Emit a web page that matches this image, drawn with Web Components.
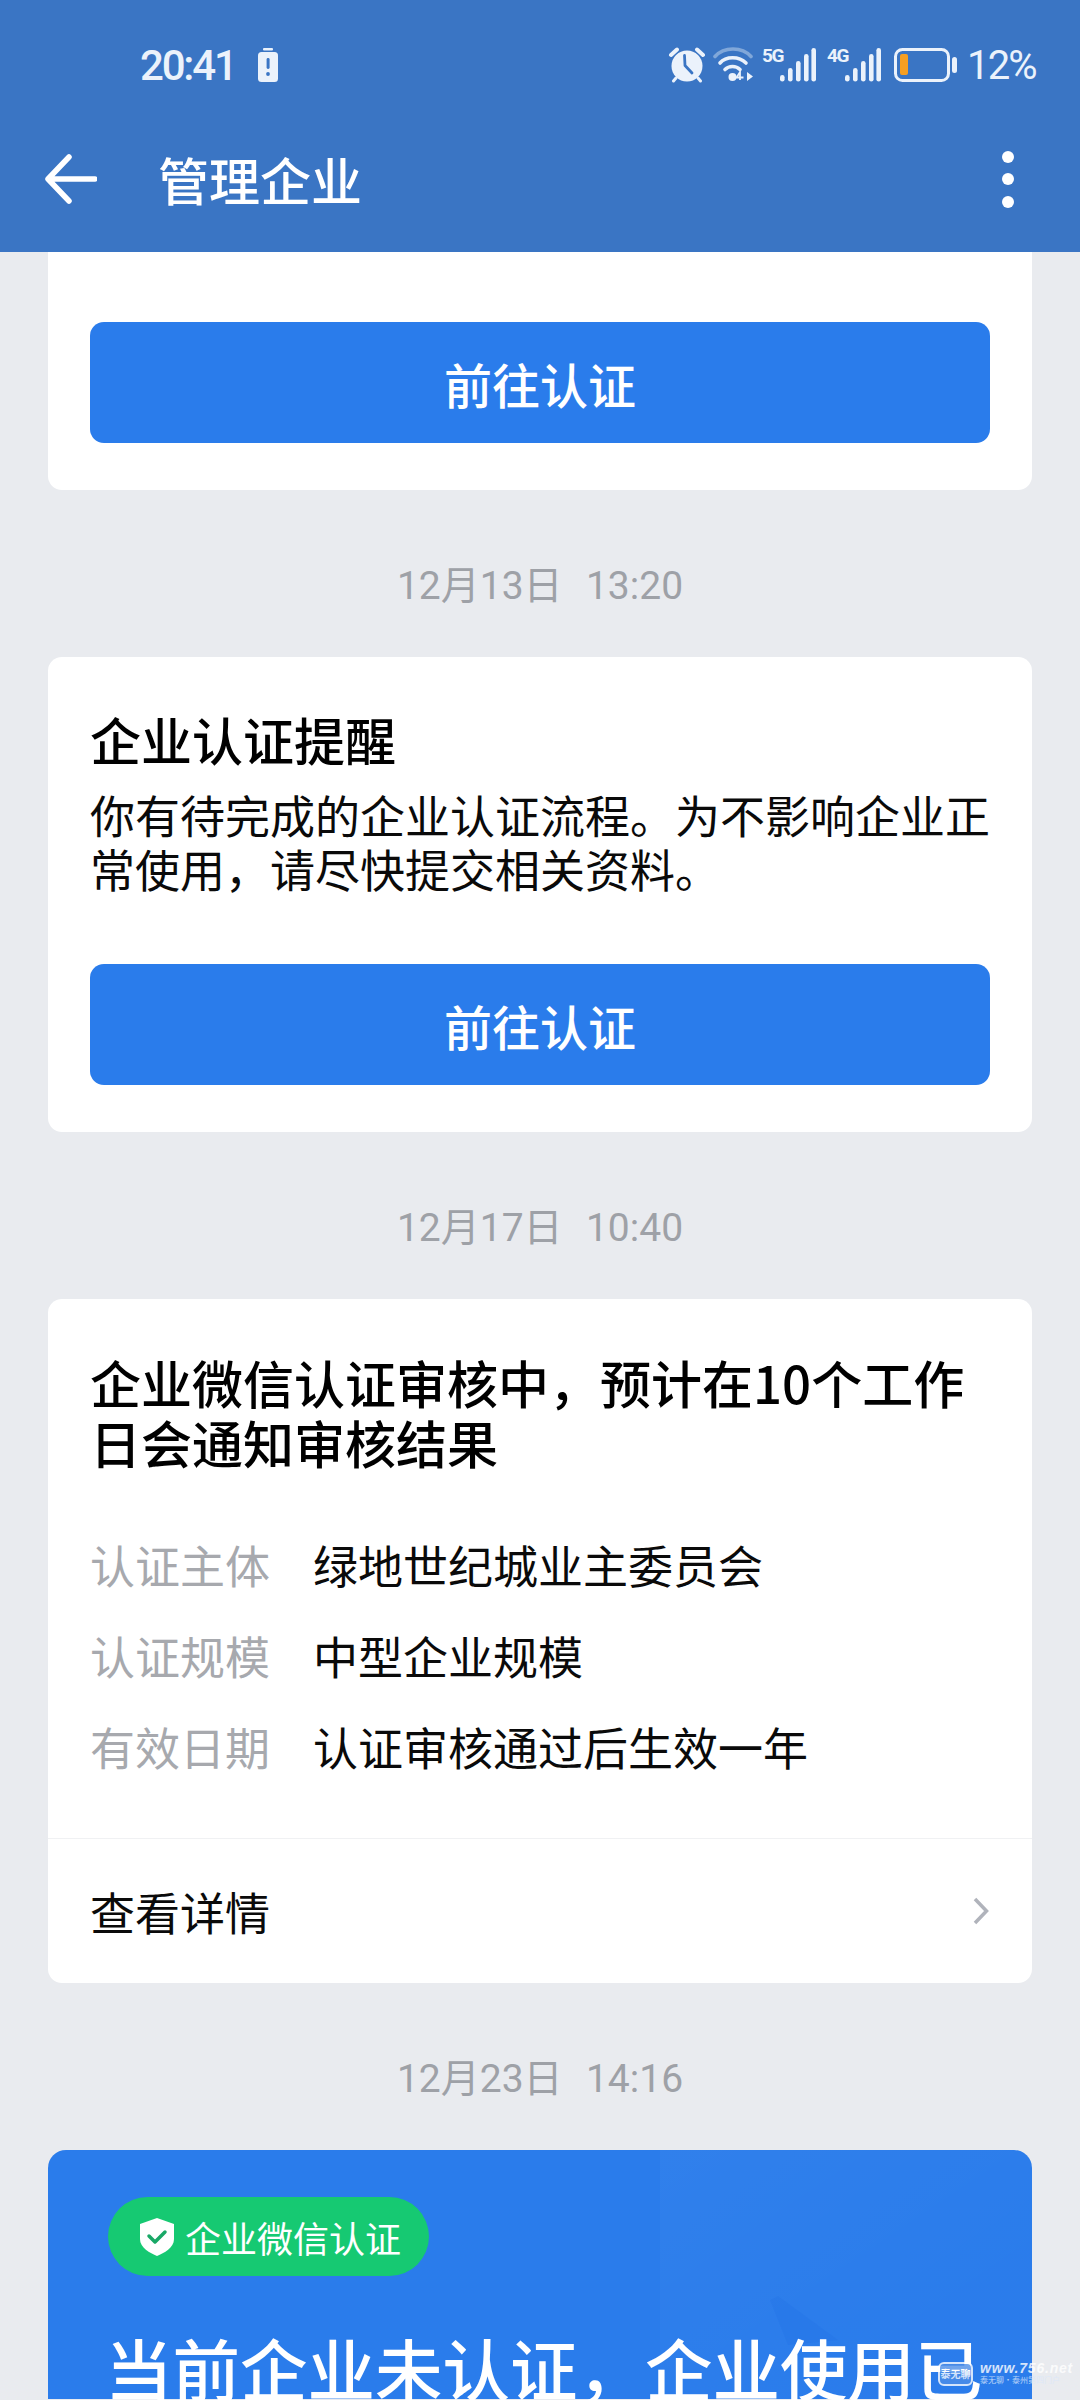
<!DOCTYPE html>
<html lang="zh"><head><meta charset="utf-8"><title>管理企业</title>
<style>
html,body{margin:0;padding:0}
body{width:1080px;height:2400px;overflow:hidden;background:#e9ebef;font-family:"Noto Sans CJK SC","Noto Sans",sans-serif;position:relative}
main{display:block;padding:0 48px}
</style></head><body>
<app-header title="管理企业"></app-header>
<main>
<notice-card clipped style="padding-top:70px"><action-button>前往认证</action-button></notice-card>
<time-label>12月13日&nbsp;&nbsp;13:20</time-label>
<notice-card heading="企业认证提醒">
  <p-text>你有待完成的企业认证流程。为不影响企业正常使用，请尽快提交相关资料。</p-text>
  <action-button>前往认证</action-button>
</notice-card>
<time-label>12月17日&nbsp;&nbsp;10:40</time-label>
<review-card heading="企业微信认证审核中，预计在10个工作日会通知审核结果">
  <info-row label="认证主体">绿地世纪城业主委员会</info-row>
  <info-row label="认证规模">中型企业规模</info-row>
  <info-row label="有效日期">认证审核通过后生效一年</info-row>
</review-card>
<time-label>12月23日&nbsp;&nbsp;14:16</time-label>
<cert-card></cert-card>
</main>
<water-mark></water-mark>
<script>
const def=(name,html)=>customElements.define(name,class extends HTMLElement{
  constructor(){super();this.attachShadow({mode:'open'})}
  connectedCallback(){this.shadowRoot.innerHTML=typeof html==='function'?html(this):html}
});
def('app-header',el=>`<style>
:host{display:block;background:#3a75c4;height:252px;color:#fff}
.status{height:130px;display:flex;align-items:center;padding:0 46px 0 140px;color:#ebf2fb;box-sizing:border-box}
.clock{font:500 42px/1 Roboto,sans-serif;letter-spacing:-2.200px;width:118px;padding-top:2px;white-space:nowrap}
.spacer{flex:1}
.icons{display:flex;align-items:center;height:50px}
.pct{font:400 40px/1 Roboto,sans-serif;margin-left:10px;letter-spacing:-1.800px;width:67px;padding-top:2px;white-space:nowrap}
svg{display:block;flex:none}
.bar{height:122px;display:flex;align-items:center;padding:0 0 24px 45px;box-sizing:border-box}
.title{font:500 51px/60px "Noto Sans CJK SC",sans-serif;margin-left:61px;flex:1}
.dots{display:flex;flex-direction:column;gap:10.500px;margin-right:66px}
.dots i{display:block;width:12px;height:12px;border-radius:50%;background:#fff}
</style>
<div class="status">
  <span class="clock">20:41</span>
  <svg width="20" height="34" viewBox="0 0 20 34"><rect x="5" y="0" width="10" height="2.400" rx="1" fill="#ebf2fb"/><rect x="0" y="4" width="20" height="30" rx="3.500" fill="#ebf2fb"/><rect x="8.600" y="10" width="3" height="11" rx="1.400" fill="#3a75c4"/><circle cx="10" cy="26" r="1.900" fill="#3a75c4"/></svg>
  <span class="spacer"></span>
  <div class="icons">
    <svg width="38" height="36" viewBox="0 0 38 36"><path d="M3 8 9 2.500M35 8 29 2.500" stroke="#ebf2fb" stroke-width="4" stroke-linecap="round"/><path d="M8 31 5.500 34M30 31 32.500 34" stroke="#ebf2fb" stroke-width="3" stroke-linecap="round"/><circle cx="19" cy="19" r="15.500" fill="#ebf2fb"/><path d="M16.500 8.500 17 18.500 24 26" fill="none" stroke="#3a75c4" stroke-width="2.800" stroke-linecap="round" stroke-linejoin="round"/></svg>
    <svg style="margin-left:7px" width="41" height="36" viewBox="0 0 41 36"><path d="M2 9.500C11-.5 29-.5 38 9.500" fill="none" stroke="#ebf2fb" stroke-opacity=".4" stroke-width="3.600" stroke-linecap="round"/><path d="M7 16C13 9 26 9 33 16" fill="none" stroke="#ebf2fb" stroke-width="3.600" stroke-linecap="round"/><path d="M12 22.500C16 18.500 23 18.500 27 22.500" fill="none" stroke="#ebf2fb" stroke-width="3.600" stroke-linecap="round"/><circle cx="19.500" cy="30" r="4" fill="#ebf2fb"/><path d="M27 33v-8l-3.500 5.500h7" fill="none" stroke="#ebf2fb" stroke-width="1.800"/><path d="M34 25l6 4.500-6 4.500z" fill="#ebf2fb"/></svg>
    <sig-icon label="5G" style="margin-left:8px"></sig-icon>
    <sig-icon label="4G" style="margin-left:11px"></sig-icon>
    <svg style="margin-left:13px" width="63" height="34" viewBox="0 0 63 34"><rect x="1.500" y="1.500" width="53" height="31" rx="7" fill="none" stroke="#ebf2fb" stroke-width="3"/><rect x="6" y="6" width="8" height="21" rx="2" fill="#f59f23"/><rect x="58" y="9" width="5" height="16" rx="2.500" fill="#ebf2fb"/></svg>
    <span class="pct">12%</span>
  </div>
</div>
<div class="bar">
  <svg width="52" height="50" viewBox="0 0 52 50"><path d="M24 3 3 25 24 47M4 25H50" fill="none" stroke="#fff" stroke-width="5.500" stroke-linecap="round" stroke-linejoin="round"/></svg>
  <span class="title">${el.getAttribute('title')}</span>
  <div class="dots"><i></i><i></i><i></i></div>
</div>`);
def('sig-icon',el=>`<style>:host{display:flex;align-items:flex-start;width:54px;height:36px}
svg{display:block;flex:none}
span{display:block;width:18px;flex:none;font:700 19px/18px Roboto,sans-serif;letter-spacing:-1.500px;color:#ebf2fb;white-space:nowrap}</style>
<span>${el.getAttribute('label')}</span>
<svg width="36" height="36" viewBox="18 0 36 36"><g fill="#ebf2fb"><rect x="18" y="28" width="4.600" height="6.500" rx="2.300"/><rect x="26" y="21" width="4.600" height="13.500" rx="2.300"/><rect x="34" y="14" width="4.600" height="20.500" rx="2.300"/><rect x="42" y="7" width="4.600" height="27.500" rx="2.300"/><rect x="49.400" y="1" width="4.600" height="33.500" rx="2.300"/></g></svg>`);
def('time-label',`<style>:host{display:block;height:167px;box-sizing:border-box;padding-top:69px;text-align:center;color:#9ea1a7;font:400 39px/54px Roboto,"Noto Sans CJK SC",sans-serif;word-spacing:2px}</style><slot></slot>`);
def('notice-card',el=>`<style>
:host{display:block;background:#fff;padding:52px 42px 47px;border-radius:${el.hasAttribute('clipped')?'0 0 14px 14px':'14px'}}
h2{margin:0 0 19px;font:500 51px/60px "Noto Sans CJK SC",sans-serif;color:#000}
</style>${el.getAttribute('heading')?`<h2>${el.getAttribute('heading')}</h2>`:''}<slot></slot>`);
def('p-text',`<style>:host{display:block;font:400 45px/54px "Noto Sans CJK SC",sans-serif;color:#0a0a0a;margin-bottom:68px}</style><slot></slot>`);
def('action-button',`<style>:host{display:flex;align-items:center;justify-content:center;height:121px;border-radius:14px;background:#2a7ceb;color:#fff;font:500 48px/1 "Noto Sans CJK SC",sans-serif}</style><slot></slot>`);
def('review-card',el=>`<style>
:host{display:block;background:#fff;border-radius:14px}
.top{padding:53px 42px 46px}
h2{margin:0 0 47px;font:500 51px/60px "Noto Sans CJK SC",sans-serif;color:#000}
.more{display:flex;align-items:center;justify-content:space-between;height:145px;padding:0 42px;border-top:1px solid #f0f1f3;box-sizing:border-box;font:400 45px/1 "Noto Sans CJK SC",sans-serif;color:#0a0a0a}
</style><div class="top"><h2>${el.getAttribute('heading')}</h2><slot></slot></div>
<div class="more"><span>查看详情</span><svg width="18" height="28" viewBox="0 0 18 28"><path d="M3 2 14.500 14 3 26" fill="none" stroke="#b0b3bb" stroke-width="3.500"/></svg></div>`);
def('info-row',el=>`<style>:host{display:flex;height:91px;align-items:center;font:400 45px/1 "Noto Sans CJK SC",sans-serif;color:#0a0a0a}
.l{width:223px;color:#a7a9ae;flex:none}</style><span class="l">${el.getAttribute('label')}</span><slot></slot>`);
def('cert-card',`<style>
:host{display:block;position:relative;height:249px;background:#2a7ceb;border-radius:18px 18px 0 0;padding:47px 0 0 60px;box-sizing:border-box;color:#fff}
.deco{position:absolute;left:0;top:0;border-radius:18px 18px 0 0}
.badge{position:relative;display:flex;align-items:center;height:79px;width:321px;box-sizing:border-box;padding-left:32px;border-radius:40px;background:#16c972;font:400 36px/1 "Noto Sans CJK SC",sans-serif}
.badge svg{margin-right:11px;flex:none}
h1{position:relative;margin:57px 0 0 -3px;padding:1px 0 0;font:500 67.500px/65px "Noto Sans CJK SC",sans-serif;white-space:nowrap}
</style>
<svg class="deco" width="984" height="249" viewBox="0 0 984 249"><defs><linearGradient id="d" x1="0" y1="0" x2="1" y2="1"><stop offset="0" stop-color="#fff" stop-opacity=".03"/><stop offset=".7" stop-color="#fff" stop-opacity=".003"/></linearGradient></defs><path d="M612 0H984V249H612Z" fill="url(#d)"/><path d="M722 150 730 146 790 190 740 195Z" fill="#2071e4" fill-opacity=".3"/></svg>
<div class="badge"><svg width="34" height="38" viewBox="0 0 34 38"><path d="M17 0 34 6V21C34 30 24 35 17 38 10 35 0 30 0 21V6Z" fill="#fff"/><path d="M9 18 15 24 25 14" fill="none" stroke="#19a866" stroke-width="3.500" stroke-linecap="round" stroke-linejoin="round"/></svg>企业微信认证</div>
<h1>当前企业未认证，企业使用已</h1>`);
def('water-mark',`<style>
:host{position:absolute;left:938px;top:2362px;display:flex;align-items:flex-start;gap:7px;color:#fff;opacity:.8}
.b{width:31px;height:20px;border:2px solid #fff;border-radius:6px;font:700 10px/20px "Noto Sans CJK SC",sans-serif;text-align:center;color:#fff;background:#4d8ee8;white-space:nowrap}
.t{font:italic 700 14px/12px "Liberation Sans",sans-serif;white-space:nowrap;letter-spacing:.8px}
.s{font:400 8px/10px "Noto Sans CJK SC",sans-serif;white-space:nowrap;color:#dbe8fb;margin-top:1px}
</style><div class="b">泰无聊</div><div><div class="t">www.756.net</div><div class="s">泰无聊·泰州第四门户</div></div>`);
</script>
</body></html>
